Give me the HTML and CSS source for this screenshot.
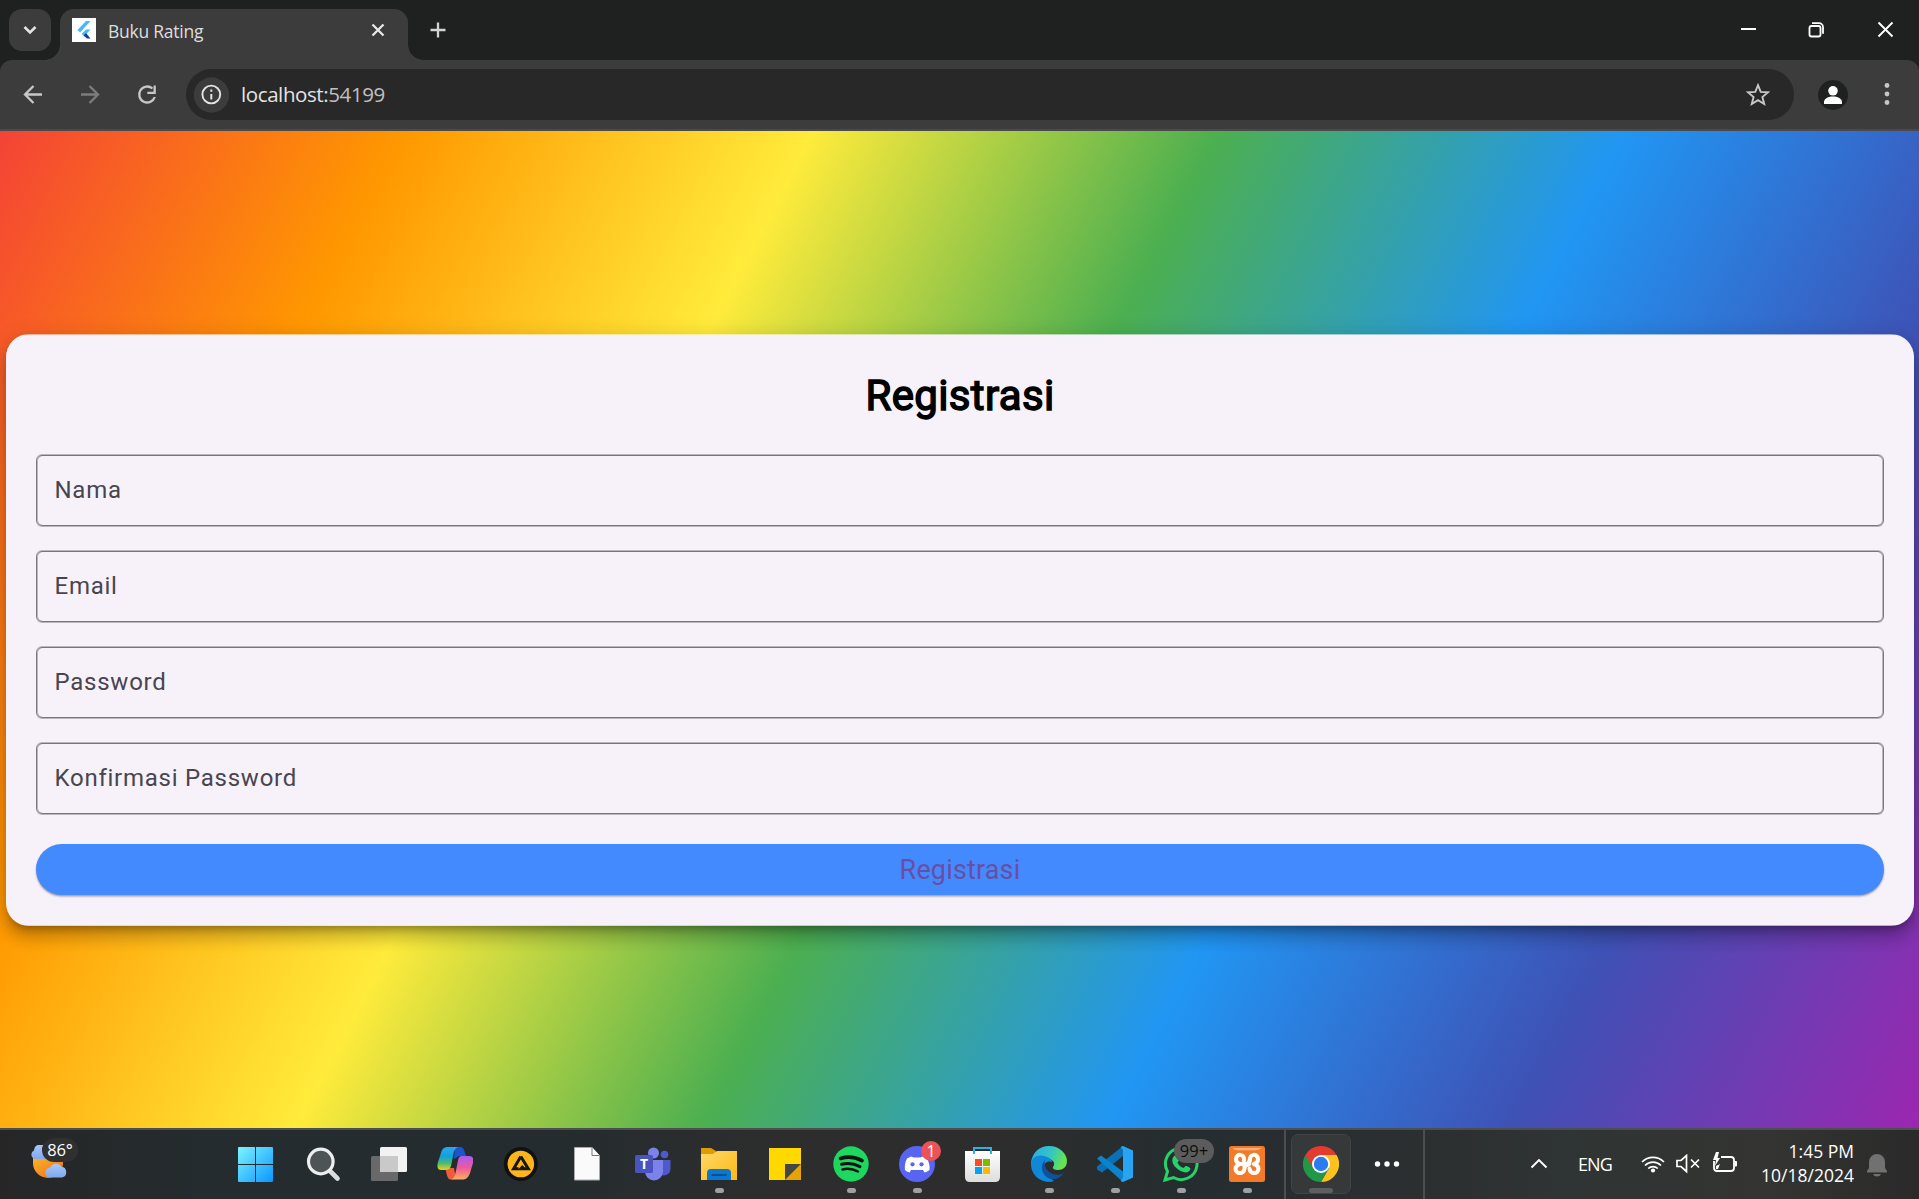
FILE: index.html
```html
<!DOCTYPE html>
<html lang="id">
<head>
<meta charset="utf-8">
<title>Buku Rating</title>
<link rel="stylesheet" href="styles.css">
</head>
<body>
<div class="screen">
  <header class="tabstrip">
    <button class="tab-search" aria-label="Search tabs"><svg width="42" height="42" viewBox="0 0 42 42"><path d="M15.500 18l5.500 5.500 5.500-5.500" fill="none" stroke="#e3e3e3" stroke-width="2.600"/></svg></button>
    <div class="tab">
      <svg class="favicon" width="24" height="24" viewBox="0 0 24 24"><path fill="#fff" d="M0 0h24v24H0z"/><path fill="#47b8f8" d="M14 3h4.500L8 14.500 5.500 12z"/><path fill="#47b8f8" d="M9.500 16L14 11.500h4.500L12.500 18z"/><path fill="#0b3f9e" d="M11.500 17.500l2.500-2.500 4.500 5.500H15z"/></svg>
      <span class="tab-title">Buku Rating</span>
      <svg class="tab-close" width="16" height="16" viewBox="0 0 16 16"><path d="M2.500 2.500l11 11M13.500 2.500l-11 11" stroke="#e8e8e8" stroke-width="2.300"/></svg>
    </div>
    <svg class="new-tab" width="18" height="18" viewBox="0 0 18 18"><path d="M9 1.500v15M1.500 9h15" stroke="#d4d4d4" stroke-width="2.300"/></svg>
    <div class="window-buttons">
      <svg width="68" height="60" viewBox="0 0 68 60"><path d="M26 29h15" stroke="#fff" stroke-width="2"/></svg>
      <svg width="68" height="60" viewBox="0 0 68 60"><g fill="none" stroke="#fff" stroke-width="1.800"><rect x="26.500" y="26" width="11" height="10.500" rx="2"/><path d="M29 23.200h7a4 4 0 0 1 4 4v6.500"/></g></svg>
      <svg width="68" height="60" viewBox="0 0 68 60"><path d="M27.500 22.500l14 14M41.500 22.500l-14 14" stroke="#fff" stroke-width="1.900"/></svg>
    </div>
  </header>
  <nav class="toolbar">
    <svg width="57" height="70" viewBox="0 0 57 70"><path d="M42 34.500H26M33.500 26l-8.500 8.500 8.500 8.500" fill="none" stroke="#c7c7c7" stroke-width="2.300"/></svg>
    <svg width="57" height="70" viewBox="0 0 57 70"><path d="M24 34.500h16M32.500 26l8.500 8.500-8.500 8.500" fill="none" stroke="#7c7c7c" stroke-width="2.300"/></svg>
    <svg width="72" height="70" viewBox="0 0 72 70"><path d="M38.500 28.500a8 8 0 1 0 2.300 8.500" fill="none" stroke="#c7c7c7" stroke-width="2.300"/><path d="M41.800 25.500v8.500h-8.500v-2.300h6.200v-6.200z" fill="#c7c7c7"/></svg>
    <div class="address">
      <svg width="36" height="36" viewBox="0 0 36 36"><circle cx="17.500" cy="18" r="17.700" fill="#3c3c3c"/><circle cx="17.300" cy="17.500" r="8.900" fill="none" stroke="#e3e3e3" stroke-width="1.900"/><path d="M17.300 17v5.500M17.300 12.500v2.200" stroke="#e3e3e3" stroke-width="2"/></svg>
      <span class="url">localhost:<span>54199</span></span>
      <svg class="star" width="26" height="26" viewBox="0 0 26 26"><path d="M13 3.200l2.700 6.700 7.200.5-5.500 4.600 1.800 7L13 18.100 6.800 22l1.800-7-5.500-4.600 7.200-.5z" fill="none" stroke="#c7c7c7" stroke-width="1.900"/></svg>
    </div>
    <svg class="profile" width="30" height="30" viewBox="0 0 30 30"><circle cx="15" cy="15" r="15" fill="#1f2120"/><circle cx="15" cy="10.800" r="4.800" fill="#fff"/><path d="M6 24v-2c0-3.700 5-5.500 9-5.500s9 1.800 9 5.500v2z" fill="#fff"/></svg>
    <svg class="menu" width="8" height="26" viewBox="0 0 8 26"><g fill="#c7c7c7"><circle cx="4" cy="4.500" r="2.400"/><circle cx="4" cy="13" r="2.400"/><circle cx="4" cy="21.500" r="2.400"/></g></svg>
  </nav>
  <main class="app">
    <form class="card">
      <h1 class="title">Registrasi</h1>
      <div class="field">Nama</div>
      <div class="field">Email</div>
      <div class="field">Password</div>
      <div class="field">Konfirmasi Password</div>
      <button class="submit" type="button">Registrasi</button>
    </form>
  </main>
  <footer class="taskbar">
    <div class="weather">
      <svg width="40" height="40" viewBox="0 0 40 40"><defs><linearGradient id="sun" x2="1" y2="1"><stop stop-color="#fbb52c"/><stop offset="1" stop-color="#ef6c12"/></linearGradient><linearGradient id="cloud" x2="0" y2="1"><stop stop-color="#a9c8fa"/><stop offset="1" stop-color="#82a8ec"/></linearGradient></defs><path d="M6 12h30v6A15 15 0 0 1 6 18z" fill="url(#sun)"/><path d="M8 14a4.500 4.500 0 0 1-1-8.500 6.500 6.500 0 0 1 12-3V14z" fill="url(#cloud)"/><path d="M23 32.500a4.900 4.900 0 0 1 0-9.800 6.500 6.500 0 0 1 11.500-1 5.500 5.500 0 0 1 .5 10.800z" fill="url(#cloud)"/></svg>
      <span class="temp">86°</span>
    </div>
    <div class="apps">
      <div class="item start"><svg viewBox="0 0 36 36"><defs><linearGradient id="win" x2="1" y2="1"><stop stop-color="#7df3ff"/><stop offset="1" stop-color="#0a97ff"/></linearGradient></defs><path fill="url(#win)" d="M1 1h16v17H0V2q0-1 1-1zM18 1h16q1 0 1 1v16H18zM0 19h17v17H1q-1 0-1-1zM18 19h17v16q0 1-1 1H18z"/></svg></div>
      <div class="item"><svg viewBox="0 0 36 36"><path d="M25 25l7.500 7.500" stroke="#d9dde0" stroke-width="4.600" stroke-linecap="round"/><circle cx="15.800" cy="15.500" r="12.300" fill="#4d5456" stroke="#eceeef" stroke-width="3.200"/></svg></div>
      <div class="item"><svg viewBox="0 0 36 36"><rect y="10" width="27" height="25" rx="1.500" fill="#6a6969"/><rect x="9" y="1" width="27" height="25" rx="1.500" fill="#f2f2f2"/><path d="M9 10h18v16H9z" fill="#c9c9c9"/></svg></div>
      <div class="item"><svg viewBox="0 0 36 36"><defs><linearGradient id="cp1" x2="0" y2="1"><stop stop-color="#2aa8f3"/><stop offset=".4" stop-color="#10a0dc"/><stop offset=".7" stop-color="#4bb873"/><stop offset="1" stop-color="#e6d51c"/></linearGradient><linearGradient id="cp2" x2="0" y2="1"><stop stop-color="#a95bf0"/><stop offset=".5" stop-color="#ef5a9b"/><stop offset="1" stop-color="#fbae5d"/></linearGradient></defs><path d="M18 1h5c3 0 4 2 5 6l1 3h-7l-5 3z" fill="#1a56d0"/><path d="M8 22h9l2 11-6 .5c-3-.5-3-6-5-11.500z" fill="#f15b3c"/><path d="M11 1h10c-3 1-4 4-5 9l-2 10c-1 3-3 4-6 4H4c-4 0-4-4-3-8l3-9c1-4 3-6 7-6z" fill="url(#cp1)"/><path d="M24 10h8c4 0 5 3 4 7l-3 10c-2 5-4 6.500-8 6.500H14c3-1 4-4 5-9l2-10c.5-3 1.500-4 3-4.500z" fill="url(#cp2)"/></svg></div>
      <div class="item"><svg viewBox="0 0 36 36"><circle cx="17.800" cy="18" r="17" fill="#111"/><circle cx="17.800" cy="18" r="13.300" fill="#fdb51c"/><path d="M17.800 10.500l7.500 12.300h-7.500l2.500-2.800M17.800 10.500l-7.200 12.300h5" fill="none" stroke="#17150f" stroke-width="3"/></svg></div>
      <div class="item"><svg viewBox="0 0 36 36"><path d="M5.500 1.500H23l7.500 8V34h-25z" fill="#fafafa" stroke="#aaa"/><path d="M23 1.500v8h7.500" fill="#fff" stroke="#777"/></svg></div>
      <div class="item"><svg viewBox="0 0 36 36"><circle cx="29.500" cy="8.500" r="3.800" fill="#5059c9"/><path d="M25 14h10.500v9a6.500 6.500 0 0 1-10.500 5z" fill="#5059c9"/><circle cx="18.500" cy="7" r="5.500" fill="#7b83eb"/><path d="M10 14h18v11.500a9 9 0 0 1-18 0z" fill="#7b83eb"/><rect y="9" width="18" height="18" rx="1.500" fill="#4b53bc"/><text x="9" y="23" text-anchor="middle" class="glyph">T</text></svg></div>
      <div class="item open"><svg viewBox="0 0 36 36"><defs><linearGradient id="fold" x2="1" y2="1"><stop stop-color="#ffd96b"/><stop offset="1" stop-color="#fcb813"/></linearGradient></defs><path d="M0 2h10l5 3v6H0z" fill="#e19b02"/><path d="M0 8h12l4-3h20v29H0z" fill="url(#fold)"/><path d="M6 34v-7q0-4 4-4h16q4 0 4 4v7z" fill="#0a78d0"/><path d="M10.500 29h15" stroke="#064f92" stroke-width="2"/></svg></div>
      <div class="item"><svg viewBox="0 0 36 36"><path d="M2 2h32v16L18 34H2z" fill="#ffd800"/><path d="M18 34V18h16z" fill="#454545"/><path d="M34 18v16H18z" fill="#e5a404"/></svg></div>
      <div class="item open"><svg viewBox="0 0 36 36"><circle cx="18" cy="18" r="17.700" fill="#1ed760"/><g fill="none" stroke="#101510" stroke-linecap="round"><path d="M7.500 12.500q11-3.500 21.500 2.200" stroke-width="3.600"/><path d="M8.500 18.300q9.500-2.500 18.500 2.300" stroke-width="3"/><path d="M9.500 23.500q8-2 15.500 2" stroke-width="2.500"/></g></svg></div>
      <div class="item open"><svg viewBox="0 0 36 36"><circle cx="18" cy="18" r="18" fill="#5865f2"/><path d="M12 10.500l3 1h6l3-1 4 2c2 4 3 7 2.500 11.500-2 1.500-3.500 2.200-5 2.500l-1.500-2.500h-12L10.500 26.500C9 26 7.500 25.500 6 24c-.5-4.500 0-8 2-11.500z" fill="#fff"/><circle cx="13.500" cy="18.300" r="2.100" fill="#5865f2"/><circle cx="22.500" cy="18.300" r="2.100" fill="#5865f2"/></svg><span class="badge red">1</span></div>
      <div class="item"><svg viewBox="0 0 36 36"><defs><linearGradient id="bag" x2="0" y2="1"><stop stop-color="#fff"/><stop offset="1" stop-color="#ddd"/></linearGradient></defs><path d="M0 5h35v26q0 5-5 5H5q-5 0-5-5z" fill="url(#bag)"/><path d="M9 8V2h17v6" fill="none" stroke="#2cb1e6" stroke-width="2"/><path fill="#f25022" d="M10 13h7v7h-7z"/><path fill="#7fba00" d="M18 13h7v7h-7z"/><path fill="#00a4ef" d="M10 21h7v7h-7z"/><path fill="#ffb900" d="M18 21h7v7h-7z"/></svg></div>
      <div class="item open"><svg viewBox="0 0 36 36"><defs><linearGradient id="ed" x2="1" y2=".3"><stop stop-color="#2aa9ea"/><stop offset=".6" stop-color="#34c6c4"/><stop offset="1" stop-color="#66e254"/></linearGradient></defs><path d="M0 17C1 7 8 0 18 0c11 0 18 8 18 15 0 6-4 9-9 9-3 0-6-1-5-3 3-4 0-7-5-9z" fill="url(#ed)"/><path d="M0 17c1-6 7-9 13-7 5 1 8 4 8 6-4-2-9 1-8 7 1 6 6 9 10 12-12 4-24-6-23-18z" fill="#1187d8"/><path d="M14 14c-5 5-4 14 3 18 7 3 12 0 16-5-5 3-12 2-16-2-3-3-4-7-3-11z" fill="#0e529f"/></svg></div>
      <div class="item open"><svg viewBox="0 0 36 36"><path d="M26 0v10L5 26.500 0 23.500v-3z" fill="#0b70b5"/><path d="M0 12.500L4 9.500l22 16V36z" fill="#0a84cf"/><path d="M26 0l10 4.500v27L26 36l-2.500-1 2.500-3V4l-2.500-3z" fill="#27a5f2"/></svg></div>
      <div class="item open"><svg viewBox="0 0 36 36"><path d="M2 34l2.500-8.500A15.800 15.800 0 1 1 10.500 31.500z" fill="none" stroke="#25d366" stroke-width="3"/><path d="M10.500 10.500c3-3 4 1 5 3s-1 2-1 3c1 3 4 5 6 5.500l2-2c2 0 5 1.500 5 3-1 3-4 4-7 3-6-2-10-6-11-10-.5-2 0-4 1-5.500z" fill="#25d366"/></svg><span class="badge grey">99+</span></div>
      <div class="item open"><svg viewBox="0 0 36 36"><rect width="36" height="36" rx="2.500" fill="#f37a26"/><path d="M4 2h28v.5q-2 1.800-6 1.800H10Q5 4.300 4 2.500z" fill="#f9b183"/><g fill="none" stroke="#fff" stroke-width="4" stroke-linejoin="round" stroke-linecap="round"><path d="M15 14.500C16 7 7 7.500 7 13c0 3 2 4.500 4 5-3 1-4.500 3-4.500 5 0 5 8.500 6 9-.5v-2c0-2 5-.5 5-3.500"/><path d="M21 14.500C20 7 29 7.500 29 13c0 3-2 4.500-4 5 3 1 4.500 3 4.500 5 0 5-8.500 6-9-.5"/><path d="M11 18h5q4 0 4.500-3.500"/></g></svg></div>
    </div>
    <div class="active-group">
      <div class="active"><svg viewBox="0 0 36 36"><path d="M18 9h15.600A18 18 0 0 1 18 36l8-14z" fill="#fcc31e"/><path d="M2.400 9A18 18 0 0 0 18 36l8-14H18z" fill="#219748"/><path d="M2.400 9A18 18 0 0 1 33.600 9H18l-8 13z" fill="#e33b2e"/><circle cx="18" cy="18" r="9" fill="#fff"/><circle cx="18" cy="18" r="7.200" fill="#2b7cf0"/></svg></div>
      <svg class="more" width="26" height="8" viewBox="0 0 26 8"><g fill="#fff"><circle cx="3.500" cy="4" r="2.700"/><circle cx="13" cy="4" r="2.700"/><circle cx="22.500" cy="4" r="2.700"/></g></svg>
    </div>
    <div class="tray">
      <svg class="chevron" width="18" height="12" viewBox="0 0 18 12"><path d="M1.500 9.500L9 2l7.500 7.500" fill="none" stroke="#fff" stroke-width="1.900"/></svg>
      <span class="lang">ENG</span>
      <svg class="wifi" width="24" height="20" viewBox="0 0 24 20"><g fill="none" stroke="#fff" stroke-width="1.700"><path d="M1 8a15.500 15.500 0 0 1 22 0M4 11.500a11.300 11.300 0 0 1 16 0M7.200 14.500a7 7 0 0 1 9.600 0"/></g><circle cx="12" cy="16.500" r="2.100" fill="#fff"/></svg>
      <svg class="sound" width="24" height="20" viewBox="0 0 24 20"><path d="M1 6.500h4l5.500-5v16L5 12.500H1zM15 5.500l8 8M23 5.500l-8 8" fill="none" stroke="#fff" stroke-width="1.700"/></svg>
      <svg class="battery" width="26" height="22" viewBox="0 0 26 22"><path d="M9 5h10q3 0 3 3v8q0 3-3 3H5q-3 0-3-3V9" fill="none" stroke="#fff" stroke-width="1.800"/><path d="M23 9.500h1.500v4.500H23z" fill="#fff" stroke="#fff"/><path d="M4 0l-3 8h3l-1 6 5-8H5.500L7 0zM4 14l4-2-2 5H4z" fill="#fff"/></svg>
      <div class="clock"><span>1:45 PM</span><span>10/18/2024</span></div>
      <svg class="bell" width="20" height="24" viewBox="0 0 20 24"><path d="M0 18l2-3V9a8 8 0 0 1 16 0v6l2 3v1.500H0zM6 21h8q-1 2.500-4 2.500T6 21z" fill="#717171"/></svg>
    </div>
  </footer>
</div>
</body>
</html>
```
FILE: styles.css
```css
* { box-sizing: border-box; }
body { margin: 0; font-family: "Open Sans", "Noto Sans", sans-serif; overflow: hidden; }
svg { display: block; flex: none; }
button { border: 0; padding: 0; font: inherit; }
.screen { width: 1919px; height: 1199px; display: flex; flex-direction: column; background: #1f2120; }

/* browser tab strip */
.tabstrip { position: relative; z-index: 1; height: 60px; flex: none; display: flex; background: #1f2120; }
.tab-search { width: 42px; height: 42px; margin: 9px 9px 0; border-radius: 13px; background: #3c3c3c; }
.tab { position: relative; width: 348px; height: 51px; margin-top: 9px; padding: 0 22px 0 12px; display: flex; align-items: flex-start; background: #3c3c3c; border-radius: 14px 14px 0 0; }
.tab::before, .tab::after { content: ""; position: absolute; bottom: 0; width: 15px; height: 15px; }
.tab::before { left: -15px; background: radial-gradient(circle at 0 0, transparent 14.500px, #3c3c3c 15px); }
.tab::after { right: -15px; background: radial-gradient(circle at 100% 0, transparent 14.500px, #3c3c3c 15px); }
.favicon { margin-top: 9px; }
.tab-title { margin: 9px auto 0 12px; font-size: 17.500px; line-height: 26px; letter-spacing: -.25px; color: #dedede; white-space: nowrap; }
.tab-close { margin-top: 13px; }
.new-tab { margin: 21px 0 0 21px; }
.window-buttons { display: flex; margin-left: auto; }

/* browser toolbar */
.toolbar { height: 71px; flex: none; display: flex; align-items: flex-start; background: linear-gradient(#3c3c3c 69px, #4a4a4a 69px); border-radius: 12px 12px 0 0; }
.address { width: 1608px; height: 51px; margin-top: 9px; padding: 0 23px 0 8px; border-radius: 26px; background: #282828; display: flex; align-items: center; }
.url { margin: -2px auto 0 11px; font-size: 20.500px; line-height: 28px; letter-spacing: -.4px; color: #e3e3e3; }
.url span { color: #c0c0c0; }
.profile { margin: 20px 0 0 24px; }
.menu { margin: 21px 0 0 35px; }

/* registration page */
.app { height: 997px; flex: none; padding: 203px 5px 0 6px; font-family: Roboto, sans-serif; background: linear-gradient(117.450deg, #f44336, #ff9800, #ffeb3b, #4caf50, #2196f3, #3f51b5, #9c27b0); overflow: hidden; }
.card { height: 592px; padding: 30px; display: flex; flex-direction: column; background: linear-gradient(rgba(247,242,250,.55) 1px, #f7f2fa 1px, #f7f2fa 591px, rgba(247,242,250,.6) 591px); border-radius: 23px; box-shadow: 0 7px 7px -4px rgba(0,0,0,.24), 0 12px 15px 1px rgba(0,0,0,.16), 0 4px 20px 3px rgba(0,0,0,.12); }
.title { margin: 0 0 31px; height: 60px; line-height: 64px; font-size: 42px; font-weight: 400; letter-spacing: .35px; text-align: center; color: #000; -webkit-text-stroke: 1.500px #000; }
.field { height: 71px; margin-bottom: 25px; padding-left: 17.500px; line-height: 69px; font-size: 24px; letter-spacing: .75px; color: #49454f; border: 1px solid #79747e; border-radius: 6px; box-shadow: 0 -1px 0 #bab5be, 0 1px 0 #bab5be, inset 1px 0 0 #bab5be, inset -1px 0 0 #bab5be; }
.submit { height: 51px; margin-top: 5px; border-radius: 26px; background: #448aff; color: #6750a4; font-size: 27px; line-height: 52px; letter-spacing: .15px; box-shadow: 0 1.500px 2px rgba(0,0,0,.35); }

/* windows taskbar */
.taskbar { height: 71px; flex: none; display: flex; border-top: 2px solid #4d4f4f; background: linear-gradient(90deg, #262626, #242c2f 11%, #242c2f 28%, #2d2d2d 40%, #2d2d2d 53%, #252d30 62%, #2b2f30 74%, #2f3434 82%, #343432 92%, #2a2a2a); color: #fff; }
.weather { position: relative; width: 222px; padding: 15px 0 0 27px; }
.temp { position: absolute; left: 42px; top: 8px; width: 36px; height: 24px; border-radius: 12px; background: #303030; font-size: 16.500px; line-height: 24px; text-align: center; letter-spacing: -.2px; }
.apps { display: flex; width: 1062px; }
.item { position: relative; width: 66px; flex: none; padding: 16px 15px 0; }
.start { width: 68px; padding-left: 16px; }
.item svg, .active svg { width: 36px; height: 36px; }
.open::after { content: ""; position: absolute; left: 29px; bottom: 6px; width: 9px; height: 5px; border-radius: 3px; background: #a0a0a0; }
.glyph { font-family: "Open Sans", sans-serif; font-size: 14px; font-weight: 700; fill: #fff; }
.badge { position: absolute; text-align: center; }
.red { left: 37px; top: 11px; width: 20px; height: 20px; border-radius: 10px; background: #ec5257; color: #fff; font-size: 16px; line-height: 20px; }
.grey { left: 26px; top: 9px; width: 40px; height: 24px; border-radius: 12px; background: #5c5c5c; color: #0c0c0c; font-size: 16.500px; line-height: 24px; }
.active-group { width: 141px; display: flex; align-items: flex-start; border-left: 2px solid #4d4f4f; border-right: 2px solid #4d4f4f; }
.active { position: relative; width: 60px; height: 60px; margin: 4px 0 0 5px; padding: 11px; border: 1px solid #414445; border-radius: 7px; background: #35393a; }
.active::after { content: ""; position: absolute; left: 17px; bottom: 0; width: 24px; height: 5px; border-radius: 3px; background: #5e5f5f; }
.more { margin: 30px 0 0 23px; }
.tray { flex: 1; display: flex; align-items: flex-start; padding-left: 105px; }
.chevron { margin-top: 28px; }
.lang { margin: 21px 0 0 30px; width: 36px; font-size: 18px; line-height: 26px; letter-spacing: -.9px; }
.wifi { margin: 24px 0 0 27px; }
.sound { margin: 24px 0 0 11px; }
.battery { margin: 22px 0 0 12px; }
.clock { width: 110px; margin: 9px 0 0 6px; display: flex; flex-direction: column; align-items: flex-end; font-size: 17.500px; line-height: 24px; letter-spacing: 0; }
.bell { margin: 23px 0 0 13px; }
```
